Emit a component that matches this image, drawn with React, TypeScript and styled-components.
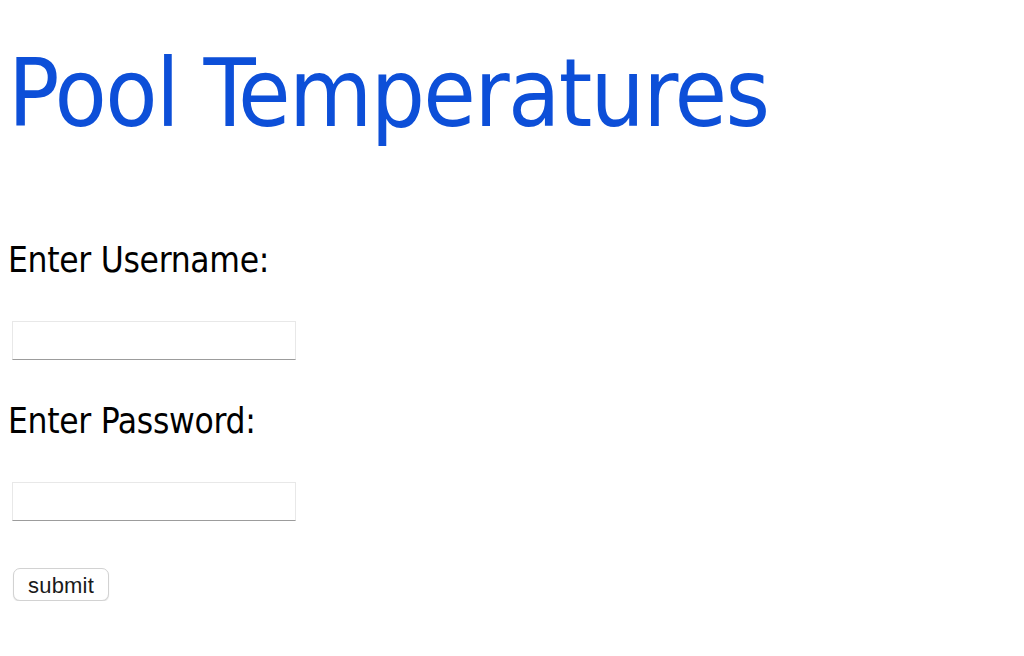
import React from "react";
import styled, { createGlobalStyle } from "styled-components";

const Global = createGlobalStyle`
  html, body { margin: 0; padding: 0; background: #ffffff; }
  * { box-sizing: border-box; }
`;

const Page = styled.main`
  display: flex;
  flex-direction: column;
  align-items: flex-start;
  padding: 38px 8px 0 8px;
  font-family: "DejaVu Sans Condensed", "DejaVu Sans", sans-serif;
  color: #000000;
`;

const Title = styled.h1`
  margin: 0;
  font-family: "DejaVu Sans Condensed", "DejaVu Sans", sans-serif;
  font-weight: 400;
  font-size: 95px;
  line-height: 110px;
  letter-spacing: -1.6px;
  color: #0d4fd8;
  white-space: nowrap;
`;

const LoginForm = styled.form`
  display: flex;
  flex-direction: column;
  align-items: flex-start;
  margin-top: 92px;
`;

const FieldLabel = styled.label<{ $gap: number }>`
  display: block;
  margin-top: ${(p) => p.$gap}px;
  font-size: 35px;
  line-height: 41px;
  letter-spacing: -0.3px;
  color: #000000;
  white-space: nowrap;
`;

const TextInput = styled.input`
  display: block;
  width: 284px;
  height: 39px;
  margin: 40px 0 0 4px;
  padding: 0 6px;
  border: 1px solid #e8e8e8;
  border-bottom: 1px solid #9c9c9c;
  border-radius: 0;
  background: #ffffff;
  font-size: 16px;
  outline: none;
`;

const SubmitButton = styled.button`
  width: 96px;
  height: 33px;
  margin: 47px 0 0 5px;
  padding: 2px 0 0 0;
  border: 1px solid #d2d2d2;
  border-radius: 7px;
  background: #ffffff;
  box-shadow: 0 1px 1px rgba(0, 0, 0, 0.12);
  font-family: "Liberation Sans", Arial, sans-serif;
  font-size: 22px;
  letter-spacing: 0.2px;
  line-height: 29px;
  color: #1a1a1a;
  cursor: pointer;
`;

export default function App() {
  return (
    <>
      <Global />
      <Page>
        <Title>Pool Temperatures</Title>
        <LoginForm onSubmit={(e) => e.preventDefault()}>
          <FieldLabel $gap={0} htmlFor="username">Enter Username:</FieldLabel>
          <TextInput id="username" type="text" />
          <FieldLabel $gap={41} htmlFor="password">Enter Password:</FieldLabel>
          <TextInput id="password" type="password" />
          <SubmitButton type="submit">submit</SubmitButton>
        </LoginForm>
      </Page>
    </>
  );
}
